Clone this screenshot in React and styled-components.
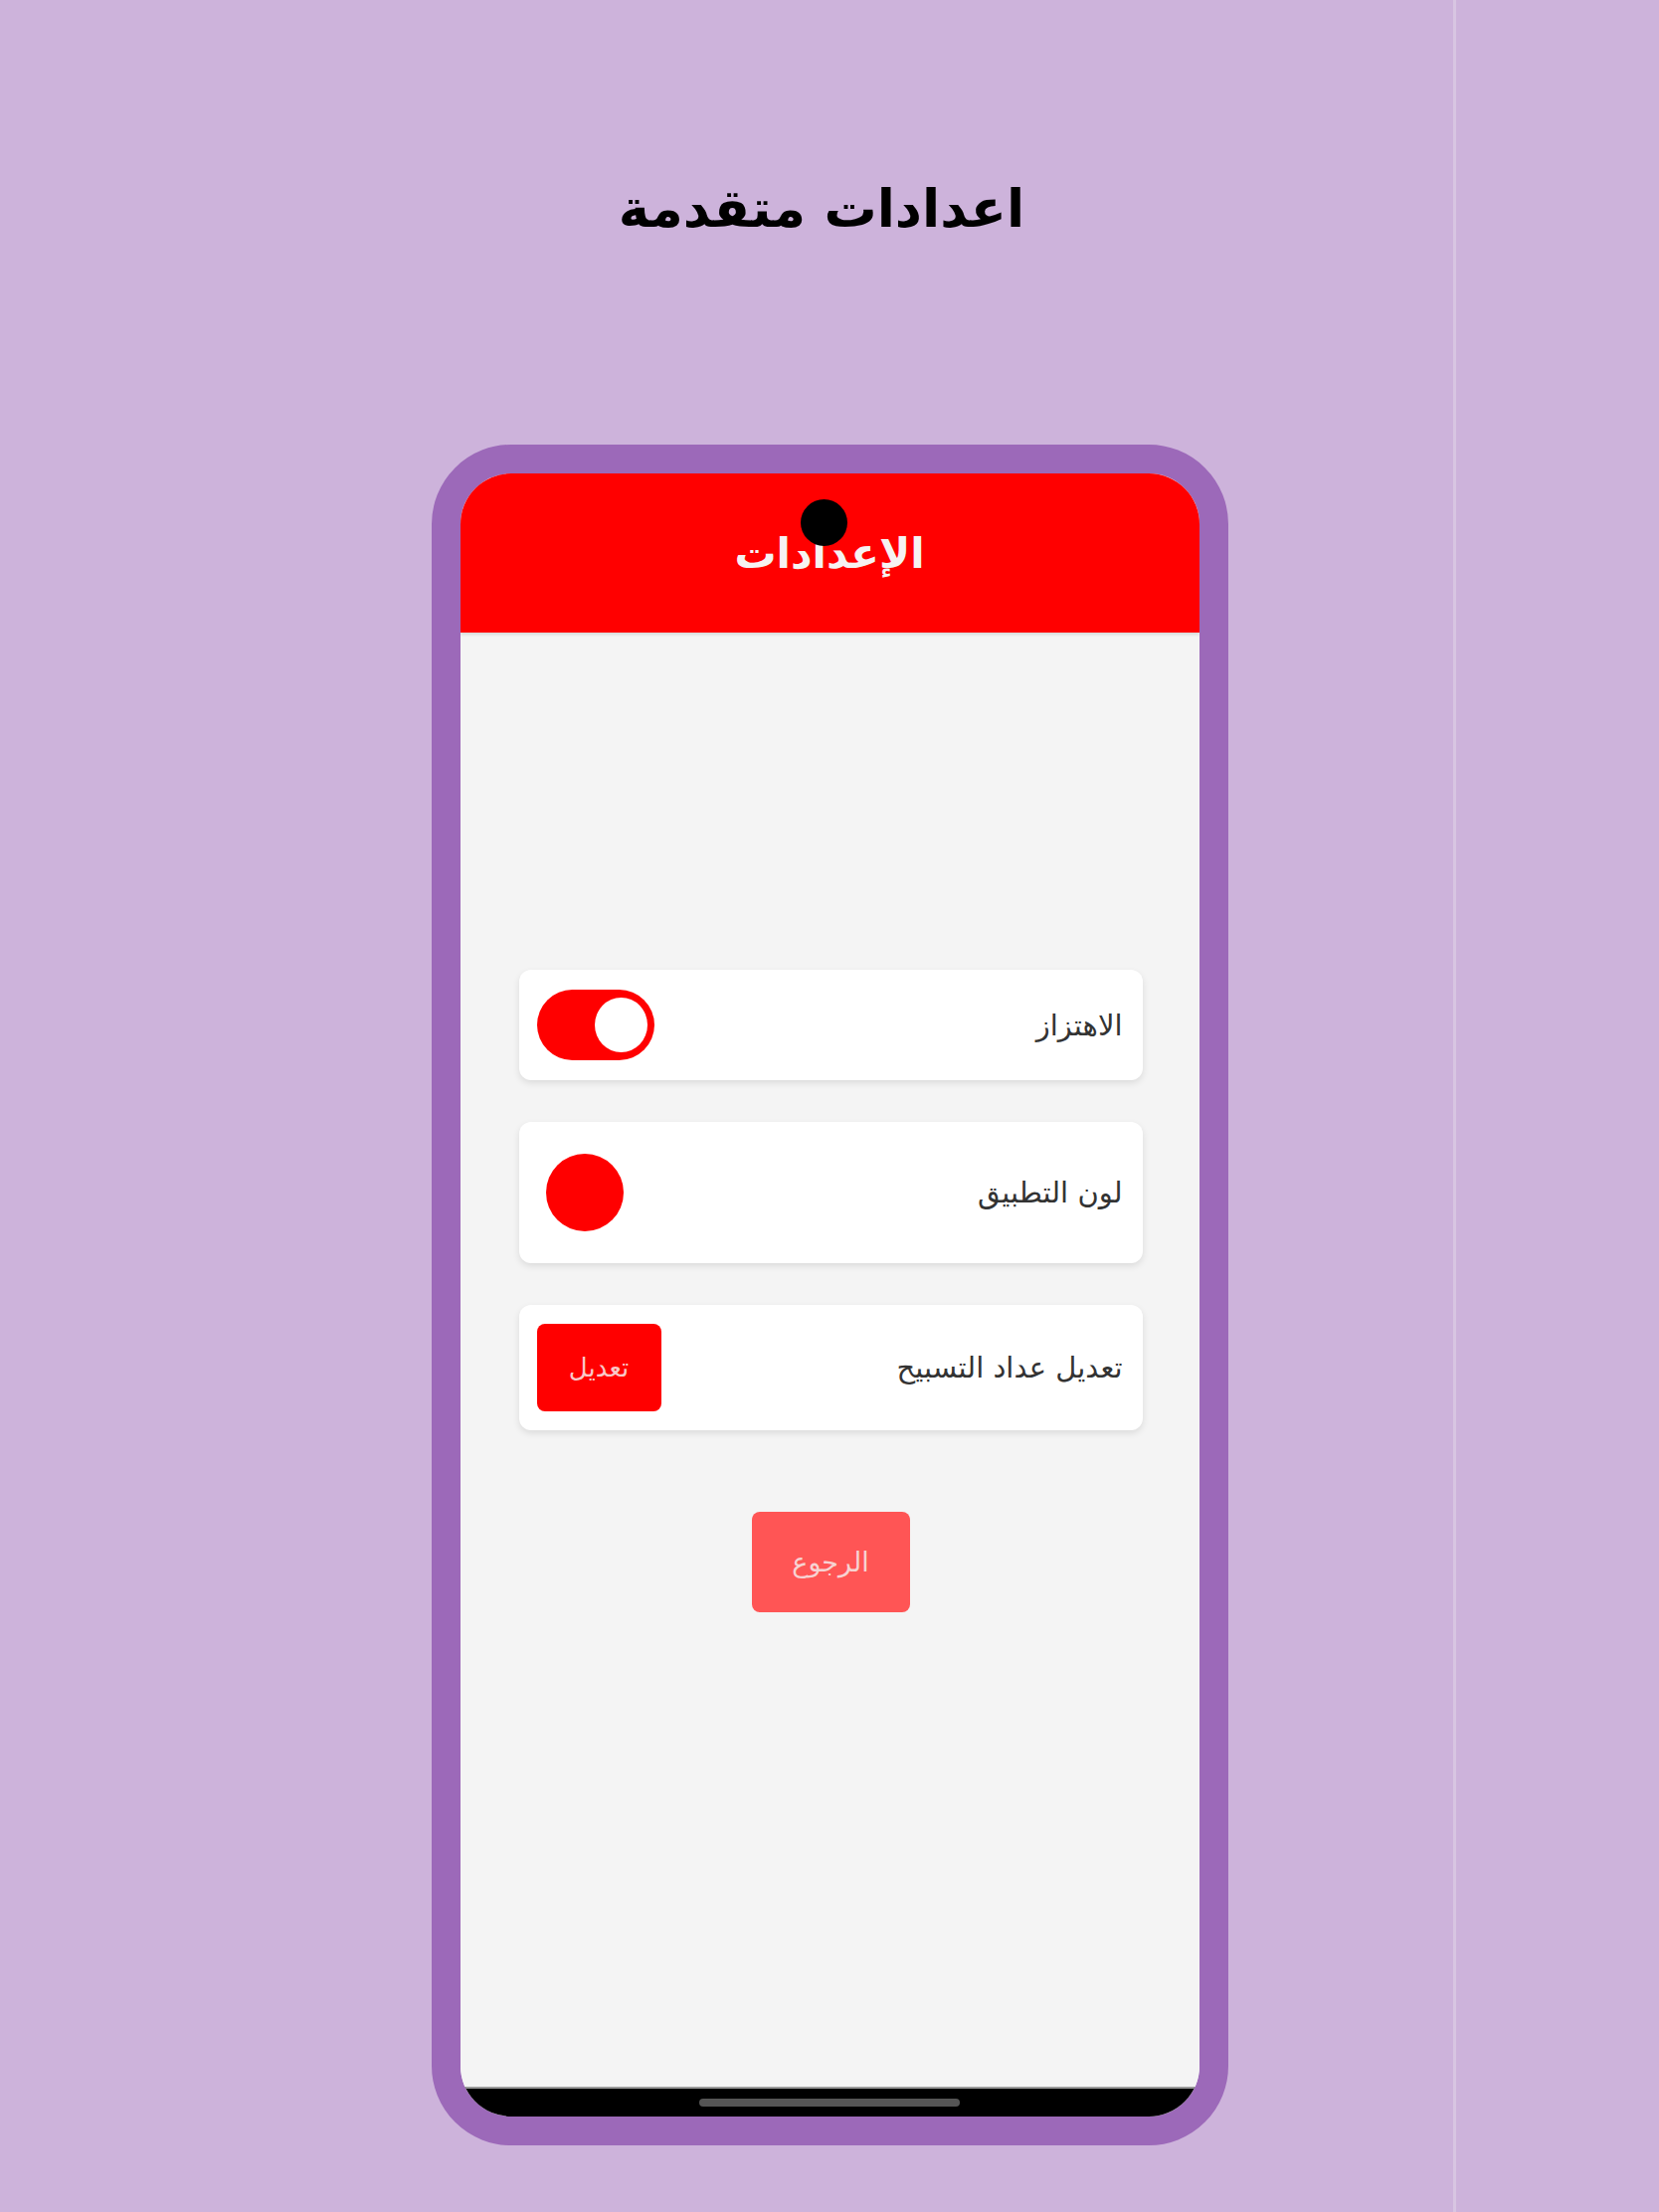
import React from "react";
import styled, { createGlobalStyle } from "styled-components";

const GlobalStyle = createGlobalStyle`
  html, body {
    margin: 0;
    padding: 0;
  }
  body {
    min-height: 2224px;
    font-family: "DejaVu Sans", "Noto Sans", sans-serif;
    background: linear-gradient(
      90deg,
      #cdb3db 0,
      #cdb3db 1461px,
      #d8c5e2 1461px,
      #d8c5e2 1464px,
      #cdb3db 1464px
    );
  }
`;

const Page = styled.div`
  display: flex;
  flex-direction: column;
  align-items: center;
  min-height: 2224px;
`;

const Title = styled.h1`
  margin: 174px 0 0;
  padding-right: 16px;
  font-family: "DejaVu Sans", sans-serif;
  font-size: 53px;
  font-weight: 700;
  color: #000;
  direction: rtl;
  line-height: 72px;
`;

const Phone = styled.div`
  margin-top: 201px;
  width: 801px;
  height: 1710px;
  box-sizing: border-box;
  border: 29px solid #9c69b9;
  border-radius: 80px;
  background: #f4f4f4;
  display: flex;
  flex-direction: column;
  overflow: hidden;
  position: relative;
`;

const Header = styled.header`
  height: 160px;
  flex-shrink: 0;
  background: #ff0000;
  display: flex;
  align-items: center;
  justify-content: center;
  position: relative;
  box-shadow: 0 2px 3px rgba(0, 0, 0, 0.12);
  z-index: 1;
`;

const HeaderTitle = styled.h2`
  margin: 0;
  color: #f6f2f2;
  font-size: 42px;
  font-weight: 700;
  direction: rtl;
`;

const Camera = styled.span`
  position: absolute;
  top: 26px;
  left: calc(50% - 29px);
  width: 47px;
  height: 47px;
  border-radius: 50%;
  background: #000;
`;

const Content = styled.main`
  flex: 1;
  display: flex;
  flex-direction: column;
  gap: 42px;
  padding: 339px 57px 0 59px;
  background: #f4f4f4;
`;

const Card = styled.div`
  direction: rtl;
  display: flex;
  align-items: center;
  justify-content: space-between;
  background: #fff;
  border-radius: 12px;
  padding: ${(p) => p.$pad || "20px 20px 20px 18px"};
  box-shadow: 0 3px 7px rgba(0, 0, 0, 0.1);
`;

const Label = styled.span`
  font-size: 29px;
  color: #333;
`;

const Toggle = styled.div`
  direction: ltr;
  width: 118px;
  height: 71px;
  box-sizing: border-box;
  border-radius: 36px;
  background: #ff0000;
  display: flex;
  align-items: center;
  justify-content: flex-end;
  padding: 0 7px;
`;

const Knob = styled.span`
  width: 53px;
  height: 55px;
  border-radius: 50%;
  background: #fff;
`;

const Swatch = styled.span`
  width: 78px;
  height: 78px;
  border-radius: 50%;
  background: #ff0000;
  margin-left: 9px;
`;

const EditButton = styled.button`
  width: 125px;
  height: 88px;
  border: none;
  border-radius: 8px;
  background: #ff0000;
  color: #f9c8c8;
  font-family: inherit;
  font-size: 26px;
`;

const BackButton = styled.button`
  align-self: center;
  margin-top: 40px;
  width: 159px;
  height: 101px;
  border: none;
  border-radius: 8px;
  background: #ff5555;
  color: #f7d2d2;
  font-family: inherit;
  font-size: 27px;
  direction: rtl;
`;

const BottomBar = styled.footer`
  height: 30px;
  flex-shrink: 0;
  background: #000;
  display: flex;
  align-items: center;
  justify-content: center;
  border-top: 2px solid #9a9a9a;
  box-sizing: border-box;
`;

const HomeIndicator = styled.span`
  width: 262px;
  height: 8px;
  border-radius: 4px;
  background: #555;
`;

export default function App() {
  return (
    <>
      <GlobalStyle />
      <Page>
        <Title>اعدادات متقدمة</Title>
        <Phone>
          <Header>
            <HeaderTitle>الإعدادات</HeaderTitle>
            <Camera />
          </Header>
          <Content>
            <Card>
              <Label>الاهتزاز</Label>
              <Toggle>
                <Knob />
              </Toggle>
            </Card>
            <Card $pad="32px 20px 32px 18px">
              <Label>لون التطبيق</Label>
              <Swatch />
            </Card>
            <Card $pad="19px 20px 19px 18px">
              <Label>تعديل عداد التسبيح</Label>
              <EditButton>تعديل</EditButton>
            </Card>
            <BackButton>الرجوع</BackButton>
          </Content>
          <BottomBar>
            <HomeIndicator />
          </BottomBar>
        </Phone>
      </Page>
    </>
  );
}
